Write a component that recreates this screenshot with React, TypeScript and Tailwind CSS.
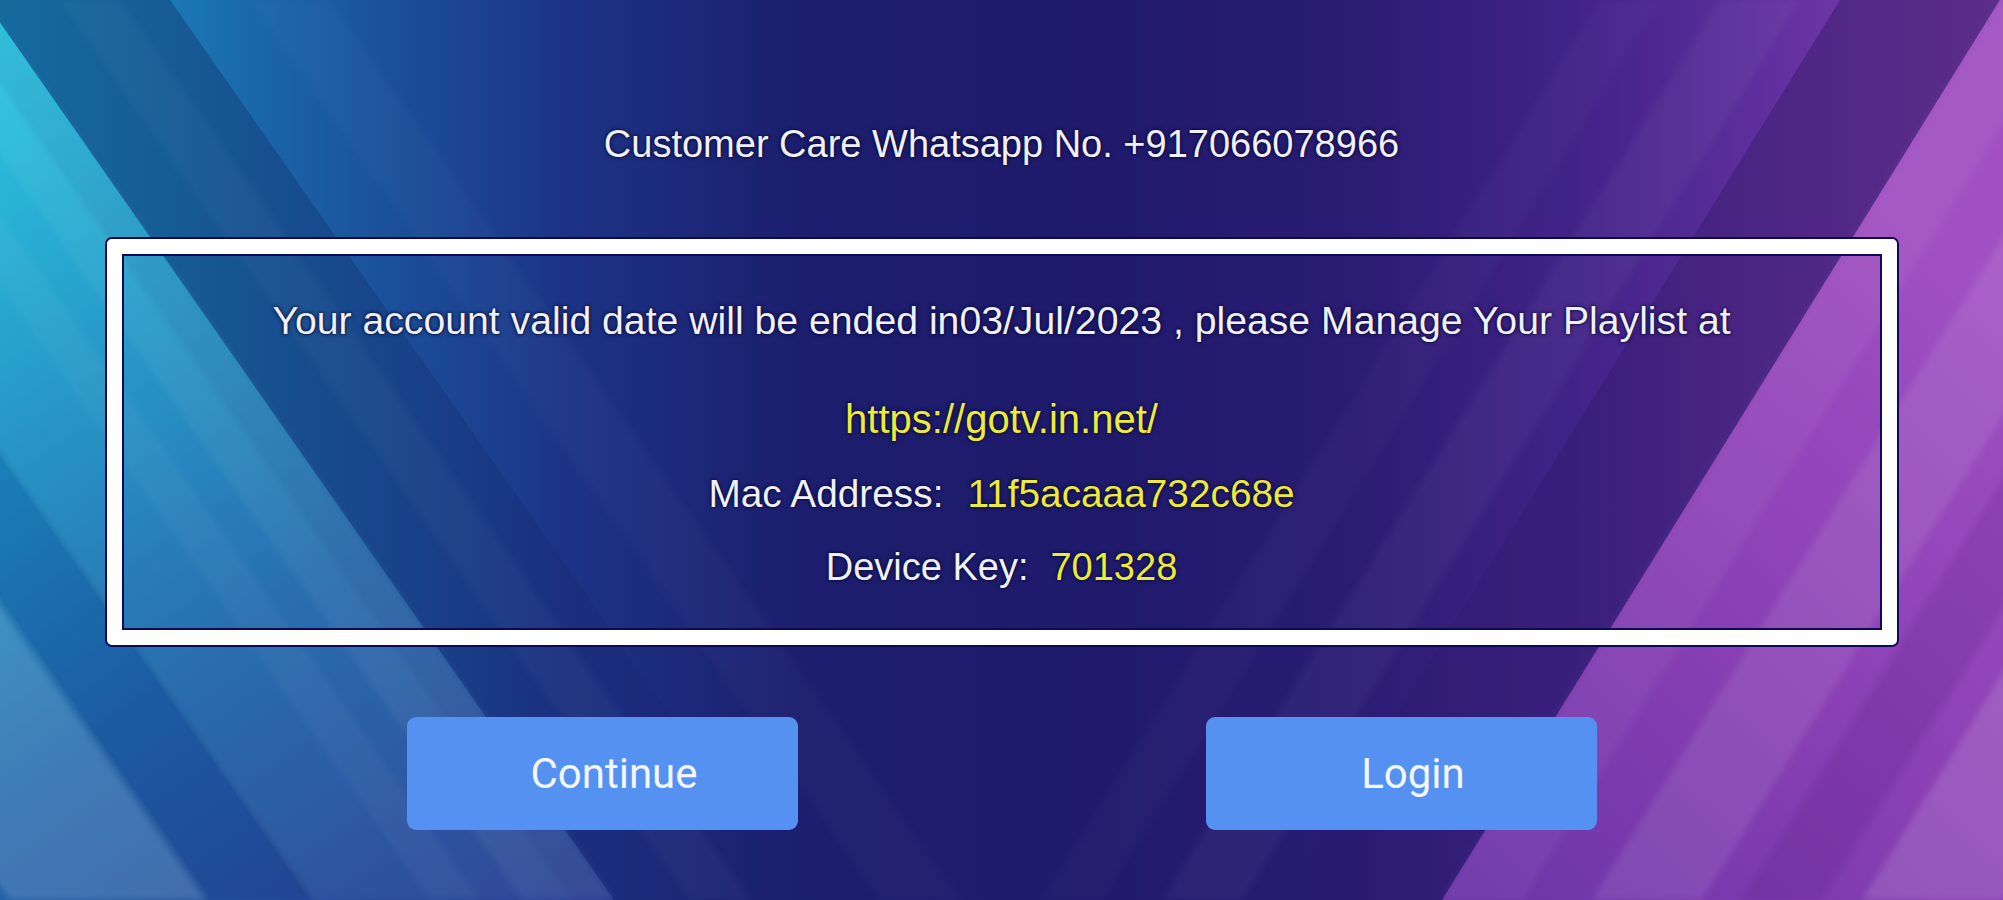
import React from "react";

function Background() {
  const L = (c1: number, c2: number) => {
    const k = 0.7;
    return `${c1},0 ${c2},0 ${c2 + k * 900},900 ${c1 + k * 900},900`;
  };
  const R = (c1: number, c2: number) => {
    const k = 0.62;
    return `${c1},0 ${c2},0 ${c2 - k * 900},900 ${c1 - k * 900},900`;
  };
  return (
    <svg
      className="absolute inset-0 w-full h-full"
      viewBox="0 0 2003 900"
      preserveAspectRatio="none"
    >
      <defs>
        <linearGradient id="base" x1="0" y1="0" x2="2003" y2="0" gradientUnits="userSpaceOnUse">
          <stop offset="0" stopColor="#1a9ccc" />
          <stop offset="0.14" stopColor="#1a62a6" />
          <stop offset="0.28" stopColor="#1c3486" />
          <stop offset="0.4" stopColor="#1c1e6e" />
          <stop offset="0.55" stopColor="#1f1a6c" />
          <stop offset="0.68" stopColor="#2b1c74" />
          <stop offset="0.8" stopColor="#44248a" />
          <stop offset="0.9" stopColor="#6632a2" />
          <stop offset="1" stopColor="#8a44b8" />
        </linearGradient>
        <linearGradient id="leftR" x1="0" y1="0" x2="620" y2="900" gradientUnits="userSpaceOnUse">
          <stop offset="0" stopColor="#22c8e2" />
          <stop offset="0.3" stopColor="#1e98c8" />
          <stop offset="0.6" stopColor="#2068ac" />
          <stop offset="1" stopColor="#283c90" />
        </linearGradient>
        <linearGradient id="rightR" x1="1440" y1="900" x2="2003" y2="300" gradientUnits="userSpaceOnUse">
          <stop offset="0" stopColor="#6a34a6" />
          <stop offset="0.5" stopColor="#8a40b4" />
          <stop offset="1" stopColor="#a050c2" />
        </linearGradient>
        <linearGradient id="shadowL" x1="0" y1="0" x2="1" y2="0">
          <stop offset="0" stopColor="#0a0a40" stopOpacity="0.35" />
          <stop offset="1" stopColor="#0a0a40" stopOpacity="0" />
        </linearGradient>
        <linearGradient id="shadowR" x1="1" y1="0" x2="0" y2="0">
          <stop offset="0" stopColor="#140a40" stopOpacity="0.4" />
          <stop offset="1" stopColor="#140a40" stopOpacity="0" />
        </linearGradient>
        <filter id="soft" x="-10%" y="-10%" width="120%" height="120%">
          <feGaussianBlur stdDeviation="3" />
        </filter>
      </defs>
      <rect x="0" y="0" width="2003" height="900" fill="url(#base)" />

      {/* left stripes region */}
      <polygon points={L(-16, 170)} fill="url(#shadowL)" />
      <polygon points="-16,0 614,900 -1000,900 -1000,0" fill="url(#leftR)" />
      <g filter="url(#soft)">
        <polygon points={L(-108, -16)} fill="#ffffff" opacity="0.09" />
        <polygon points={L(-314, -108)} fill="#ffffff" opacity="0.04" />
        <polygon points={L(-426, -314)} fill="#0a1050" opacity="0.12" />
        <polygon points={L(-620, -426)} fill="#ffffff" opacity="0.14" />
        <polygon points={L(-60, -16)} fill="#0a1050" opacity="0.07" />
        <polygon points={L(-200, -150)} fill="#ffffff" opacity="0.04" />
        <polygon points={L(60, 120)} fill="#ffffff" opacity="0.03" />
        <polygon points={L(250, 330)} fill="#ffffff" opacity="0.025" />
      </g>

      {/* right stripes region */}
      <polygon points={R(1840, 2000)} fill="url(#shadowR)" />
      <polygon points="2000,0 1442,900 3000,900 3000,0" fill="url(#rightR)" />
      <g filter="url(#soft)">
        <polygon points={R(2000, 2080)} fill="#ffffff" opacity="0.05" />
        <polygon points={R(2150, 2260)} fill="#ffffff" opacity="0.09" />
        <polygon points={R(2300, 2380)} fill="#2a0a50" opacity="0.12" />
        <polygon points={R(2420, 2560)} fill="#ffffff" opacity="0.13" />
        <polygon points={R(2600, 2800)} fill="#ffffff" opacity="0.18" />
        <polygon points={R(1720, 1800)} fill="#ffffff" opacity="0.04" />
        <polygon points={R(1600, 1660)} fill="#ffffff" opacity="0.025" />
      </g>
    </svg>
  );
}

const shadow = "[text-shadow:0_0_4px_rgba(8,8,50,0.95),0_0_2px_rgba(8,8,50,0.9)]";
const body = "font-['Liberation_Sans','Arial',sans-serif]";

export default function App() {
  return (
    <div className="relative w-[2003px] h-[900px] overflow-hidden bg-[#1c1c6c] font-['Roboto',sans-serif]">
      <Background />
      <div className="relative flex flex-col items-center pt-[121px]">
        <p
          className={`h-[46px] leading-[46px] text-[38px] text-[#f0f0f8] whitespace-pre ${body} ${shadow}`}
        >
          Customer Care Whatsapp No. +917066078966
        </p>
        <div className="mt-[72px] w-[1790px] h-[406px] border-[15px] border-white rounded-[5px] shadow-[0_0_0_2px_#0c0a58,inset_0_0_0_2px_#0c0a58] flex flex-col items-center pt-[44px]">
          <p className={`h-[46px] leading-[46px] text-[39.2px] text-[#f0f0f8] whitespace-pre ${body} ${shadow}`}>
            Your account valid date will be ended in03/Jul/2023 , please Manage Your Playlist at
          </p>
          <p className={`mt-[52px] h-[46px] leading-[46px] text-[40px] text-[#ecea3a] whitespace-pre ${body} ${shadow}`}>
            https://gotv.in.net/
          </p>
          <p className={`mt-[29px] h-[46px] leading-[46px] text-[38.8px] text-[#f0f0f8] whitespace-pre ${body} ${shadow}`}>
            Mac Address:<span className="ml-[24px] text-[#ecea3a]">11f5acaaa732c68e</span>
          </p>
          <p className={`mt-[27px] h-[46px] leading-[46px] text-[38px] text-[#f0f0f8] whitespace-pre ${body} ${shadow}`}>
            Device Key:<span className="ml-[22px] text-[#ecea3a]">701328</span>
          </p>
        </div>
        <div className="mt-[72px] flex gap-[408px]">
          <button className="w-[391px] h-[113px] pl-[24px] rounded-[9px] bg-[#5591f0] text-[42px] text-[#f4f6ff] font-['Roboto',sans-serif]">
            Continue
          </button>
          <button className="w-[391px] h-[113px] pl-[24px] rounded-[9px] bg-[#5591f0] text-[42px] text-[#f4f6ff] font-['Roboto',sans-serif]">
            Login
          </button>
        </div>
      </div>
    </div>
  );
}
